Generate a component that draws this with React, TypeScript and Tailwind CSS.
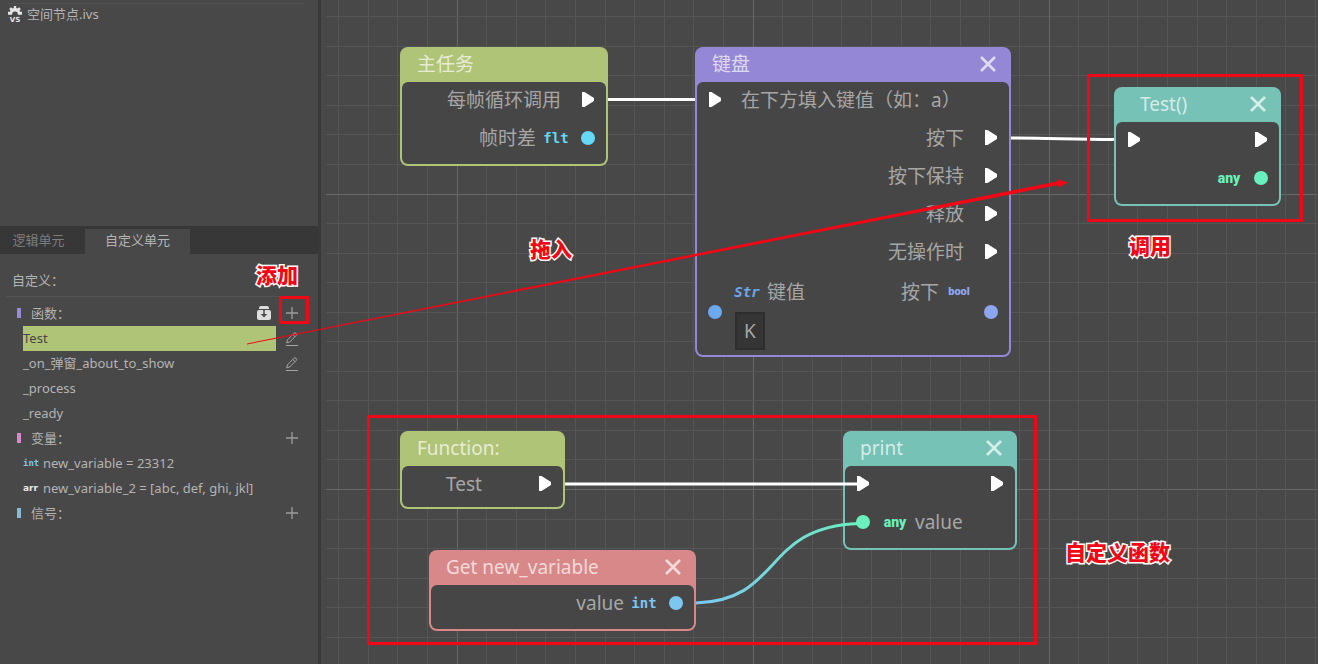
import type {ReactNode} from 'react'
import cx from 'clsx'

const CELL_X = 29.6
const CELL_Y = 29.55
const GRID_X = 432
const GRID_Y = 194

const gridSteps = Array.from({length: 80}, (_, i) => i - 20)

const typeStyles = {
  flt: {
    name: 'flt',
    text: "text-[#64d8f5] text-[14px] font-['DejaVu_Sans_Mono']",
    dot: 'bg-[#64d8f5]',
  },
  str: {
    name: 'Str',
    text: "text-[#6ba8ee] text-[14px] font-['DejaVu_Sans_Mono'] italic",
    dot: 'bg-[#6ba8ee]',
  },
  bool: {name: 'bool', text: "text-[#8ea6f0] text-[11px] font-['Roboto']", dot: 'bg-[#8ea6f0]'},
  any: {name: 'any', text: "text-[#6aefbe] text-[14px] font-['Roboto']", dot: 'bg-[#6aefbe]'},
  int: {
    name: 'int',
    text: "text-[#7cc6f0] text-[14px] font-['DejaVu_Sans_Mono']",
    dot: 'bg-[#7cc6f0]',
  },
}

type PortType = keyof typeof typeStyles | 'flow'

function FileIcon() {
  return (
    <svg viewBox="0 0 14 16" className="h-4 w-3.5 shrink-0 fill-[#e4e4e4]" aria-hidden="true">
      <path d="M5.800 0h2.400v2l1.400.6 1.500-1.300 1.700 1.700-1.300 1.400.6 1.300H14v3H9.800A2.800 2.800 0 0 0 7 5.600 2.800 2.800 0 0 0 4.200 8.700H0v-3h1.900l.6-1.300L1.200 3l1.700-1.700 1.500 1.300L5.800 2z" />
      <text
        x="7"
        y="15.500"
        textAnchor="middle"
        className="font-['DejaVu_Sans'] text-[7px] font-bold"
      >
        VS
      </text>
    </svg>
  )
}

function OverrideIcon() {
  return (
    <svg viewBox="0 0 14 14" className="h-3.5 w-3.5" aria-hidden="true">
      <path
        d="M4 0h6a2 2 0 0 1 2 2v1H2V2a2 2 0 0 1 2-2zM2 4h10a2 2 0 0 1 2 2v6a2 2 0 0 1-2 2H2a2 2 0 0 1-2-2V6a2 2 0 0 1 2-2z"
        fill="#dedede"
      />
      <path d="M7 3v7" stroke="#484848" strokeWidth="1.500" />
      <path d="M3.800 8h6.400L7 11.500z" fill="#484848" />
    </svg>
  )
}

function PlusIcon() {
  return (
    <svg viewBox="0 0 12 12" className="h-3 w-3" fill="none" stroke="#9c9c9c" aria-hidden="true">
      <path d="M6 0v12M0 6h12" strokeWidth="1.300" />
    </svg>
  )
}

function PencilIcon() {
  return (
    <svg viewBox="0 0 14 14" className="h-3.5 w-3.5" fill="none" stroke="#a6a6a6" aria-hidden="true">
      <path d="M1.700 10.800 2.500 7.800 8.900 1.300q1.100-1 2.200 0t0 2.200L4.700 10zM7.700 2.500l2.200 2.200M1 13.500h12" />
    </svg>
  )
}

function CloseIcon() {
  return (
    <svg viewBox="0 0 16 16" className="h-4 w-4" fill="none" stroke="currentColor" aria-hidden="true">
      <path d="m1 1 14 14M15 1 1 15" strokeWidth="2.600" />
    </svg>
  )
}

function IconButton({label, children}: {label: string; children: ReactNode}) {
  return (
    <button type="button" aria-label={label} className="flex h-6 w-7 items-center justify-center">
      {children}
    </button>
  )
}

function Section({name, marker, children}: {name: string; marker: string; children?: ReactNode}) {
  return (
    <div className="flex h-[25px] items-center pr-3 pb-0.5 pl-[17px]">
      <span className={cx('h-2.5 w-1', marker)} />
      <span className="mr-auto ml-2.5">{name}：</span>
      {children}
      <IconButton label={`添加${name}`}>
        <PlusIcon />
      </IconButton>
    </div>
  )
}

function Member({
  name,
  active,
  editable,
}: {
  name: string
  active?: boolean
  editable?: boolean
}) {
  return (
    <div className="flex h-[25px] items-center pr-3 pl-[23px]">
      <button
        type="button"
        className={cx('mr-0.5 h-[25px] flex-1 pb-0.5 text-left', active && 'bg-[#b0c477] text-[#444]')}
      >
        {name}
      </button>
      {editable && (
        <IconButton label={`编辑 ${name}`}>
          <PencilIcon />
        </IconButton>
      )}
    </div>
  )
}

function Variable({type, color, children}: {type: string; color: string; children: ReactNode}) {
  return (
    <div className="flex h-[25px] items-center pb-0.5 pl-[23px]">
      <span className={cx('w-5 text-[9px] font-bold', color)}>{type}</span>
      <span>{children}</span>
    </div>
  )
}

function Sidebar() {
  return (
    <aside className="flex w-[321px] shrink-0 flex-col border-r-3 border-[#393939] text-[13px] leading-5 text-[#b4b4b4]">
      <div className="h-[226px] pt-[3px] pr-3.5 pl-[7px]">
        <div className="flex items-center gap-[5px] border-t border-[#525252] px-px">
          <FileIcon />
          <a href="#ivs">空间节点.ivs</a>
        </div>
      </div>
      <div role="tablist" className="flex h-7 items-end bg-[#373737]">
        <button type="button" role="tab" className="h-[25px] w-[85px] pr-2 pb-1 text-[#7c7c7c]">
          逻辑单元
        </button>
        <button
          type="button"
          role="tab"
          aria-selected
          className="h-[25px] w-[105px] bg-[#484848] pb-1"
        >
          自定义单元
        </button>
      </div>
      <h2 className="mr-3.5 ml-1.5 flex h-[43px] items-center border-b border-[#545454] pt-2.5 pl-1.5">
        自定义：
      </h2>
      <div className="mt-1">
        <Section name="函数" marker="bg-[#978bd8]">
          <IconButton label="重写函数">
            <OverrideIcon />
          </IconButton>
        </Section>
        <Member name="Test" active editable />
        <Member name="_on_弹窗_about_to_show" editable />
        <Member name="_process" />
        <Member name="_ready" />
        <Section name="变量" marker="bg-[#d888cc]" />
        <Variable type="int" color="text-[#7cc6f0] font-['DejaVu_Sans_Mono']">
          new_variable = 23312
        </Variable>
        <Variable type="arr" color="text-[#e8e8e8] font-['DejaVu_Sans']">
          new_variable_2 = [abc, def, ghi, jkl]
        </Variable>
        <Section name="信号" marker="bg-[#86bbd8]" />
      </div>
    </aside>
  )
}

function Port({type}: {type?: PortType}) {
  return (
    <span className="flex w-6 shrink-0 justify-center">
      {type === 'flow' && (
        <svg viewBox="0 0 12 15" className="h-[15px] w-3 fill-white" aria-hidden="true">
          <path d="M0 0h2.500L12 6v3l-9.500 6H0z" />
        </svg>
      )}
      {type && type !== 'flow' && (
        <span className={cx('h-3.5 w-3.5 rounded-full', typeStyles[type].dot)} />
      )}
    </span>
  )
}

function TypeTag({type}: {type: Exclude<PortType, 'flow'>}) {
  return (
    <span className="mx-2 flex w-6 justify-center">
      <span className={cx('leading-4 font-black', typeStyles[type].text)}>
        {typeStyles[type].name}
      </span>
    </span>
  )
}

function Row({
  input,
  output,
  left,
  right,
}: {
  input?: PortType
  output?: PortType
  left?: string
  right?: string
}) {
  return (
    <div className="flex h-[38px] items-center px-1.5 pb-[3px]">
      <Port type={input} />
      {input && input !== 'flow' && <TypeTag type={input} />}
      {left && <span className={cx((!input || input === 'flow') && 'ml-3.5')}>{left}</span>}
      <span className="flex-1" />
      {right && <span className={cx(output === 'flow' && 'mr-[15px]')}>{right}</span>}
      {output && output !== 'flow' && <TypeTag type={output} />}
      <Port type={output} />
    </div>
  )
}

function Node({
  title,
  className,
  closable,
  indent,
  compact,
  children,
}: {
  title: string
  className: string
  closable?: boolean
  indent?: boolean
  compact?: boolean
  children: ReactNode
}) {
  return (
    <article className={cx('absolute rounded-lg p-0.5 text-[19px] leading-7', className)}>
      <header
        className={cx(
          'flex h-[33px] items-center justify-between pr-[13px] pb-1 text-white/70',
          indent ? 'pl-6' : 'pl-[15px]',
        )}
      >
        <h3>{title}</h3>
        {closable && (
          <button type="button" aria-label={`关闭 ${title}`}>
            <CloseIcon />
          </button>
        )}
      </header>
      <div
        className={cx(
          'rounded-md bg-[#464646] whitespace-nowrap text-[#a6a6a6]',
          compact ? 'pb-[3px]' : 'pb-1.5',
        )}
      >
        {children}
      </div>
    </article>
  )
}

function Grid() {
  return (
    <svg className="absolute inset-y-0 right-0 left-[5px] h-full w-full" aria-hidden="true">
      {gridSteps.map((i) => {
        const x = Math.floor(GRID_X - 5 + i * CELL_X) + 0.5
        const y = Math.floor(GRID_Y + i * CELL_Y) + 0.5
        const stroke = i % 10 === 0 ? '#686868' : '#555555'
        return (
          <g key={i} stroke={stroke}>
            <line x1={x} y1="0" x2={x} y2="100%" />
            <line x1="0" y1={y} x2="100%" y2={y} />
          </g>
        )
      })}
    </svg>
  )
}

function Wires() {
  return (
    <svg className="pointer-events-none absolute inset-0 h-full w-full" fill="none" aria-hidden="true">
      <defs>
        <linearGradient id="wire" gradientUnits="userSpaceOnUse" x1="375" y1="0" x2="540" y2="0">
          <stop offset="0" stopColor="#7cc6f0" />
          <stop offset="1" stopColor="#6aefbe" />
        </linearGradient>
      </defs>
      <g stroke="#fff" strokeWidth="3">
        <path d="M287 99.500h87" />
        <path d="M690 138c40 0 60 1.500 103 1.500" />
        <path d="M244 484h293" />
      </g>
      <path d="M375 603c88-3 65-76 163-79.500" stroke="url(#wire)" strokeWidth="3" />
    </svg>
  )
}

function Graph() {
  return (
    <main className="relative min-w-0 flex-1 overflow-hidden">
      <Grid />
      <Node title="主任务" className="top-[47px] left-[79px] w-52 bg-[#b0c477]">
        <Row right="每帧循环调用" output="flow" />
        <Row right="帧时差" output="flt" />
      </Node>
      <Node title="键盘" closable compact className="top-[47px] left-[374px] w-[316px] bg-[#9488d6]">
        <Row input="flow" left="在下方填入键值（如：a）" />
        <Row right="按下" output="flow" />
        <Row right="按下保持" output="flow" />
        <Row right="释放" output="flow" />
        <Row right="无操作时" output="flow" />
        <div className="flex h-20 items-center px-1.5">
          <Port type="str" />
          <div className="self-start">
            <label htmlFor="key" className="flex h-10 items-center">
              <TypeTag type="str" />
              键值
            </label>
            <input
              id="key"
              defaultValue="K"
              className="ml-2 block h-[38px] w-[30px] border-2 border-[#2e2e2e] bg-[#353535] text-center"
            />
          </div>
          <div className="ml-auto flex h-10 items-center self-start">
            按下
            <TypeTag type="bool" />
          </div>
          <Port type="bool" />
        </div>
      </Node>
      <Node title="Test()" closable indent className="top-[87px] left-[793px] w-[167px] bg-[#76c2b7]">
        <Row input="flow" output="flow" />
        <Row output="any" />
      </Node>
      <Node title="Function:" compact className="top-[431px] left-[79px] w-[165px] bg-[#b0c477]">
        <Row left="Test" output="flow" />
      </Node>
      <Node title="print" closable className="top-[431px] left-[522px] w-[174px] bg-[#76c2b7]">
        <Row input="flow" output="flow" />
        <Row input="any" left="value" />
      </Node>
      <Node
        title="Get new_variable"
        closable
        className="top-[550px] left-[108px] w-[267px] bg-[#d88888]"
      >
        <Row right="value" output="int" />
      </Node>
      <Wires />
    </main>
  )
}

function Note({className, children}: {className: string; children: ReactNode}) {
  return (
    <span
      className={cx(
        'absolute text-[21px] leading-7 font-black whitespace-nowrap text-[#f00816] [-webkit-text-stroke:3px_#fff] [paint-order:stroke_fill]',
        className,
      )}
    >
      {children}
    </span>
  )
}

// tutorial marks laid over the editor
function Annotations() {
  return (
    <div className="pointer-events-none absolute inset-0 overflow-hidden">
      <div className="absolute top-[296px] left-[279px] h-7 w-[30px] border-3 border-[#f00816]" />
      <div className="absolute top-[74px] left-[1087px] h-[148px] w-[216px] border-3 border-[#f00816]" />
      <div className="absolute top-[415px] left-[367px] h-[230px] w-[670px] border-3 border-[#f00816]" />
      <svg className="absolute inset-0 h-full w-full fill-[#f00816]" aria-hidden="true">
        <path d="m247 343.500 811-162.200-1-2.300 11 3.500-9.300 5-.7-2.400L247 344.500z" />
      </svg>
      <Note className="top-[261px] left-[256px]">添加</Note>
      <Note className="top-[235px] left-[530px]">拖入</Note>
      <Note className="top-[232px] left-[1129px]">调用</Note>
      <Note className="top-[538px] left-[1065px]">自定义函数</Note>
    </div>
  )
}

export default function App() {
  return (
    <div
      lang="zh-CN"
      className="relative flex min-h-screen bg-[#484848] font-['Noto_Sans','Noto_Sans_CJK_SC',sans-serif]"
    >
      <Sidebar />
      <Graph />
      <Annotations />
    </div>
  )
}
